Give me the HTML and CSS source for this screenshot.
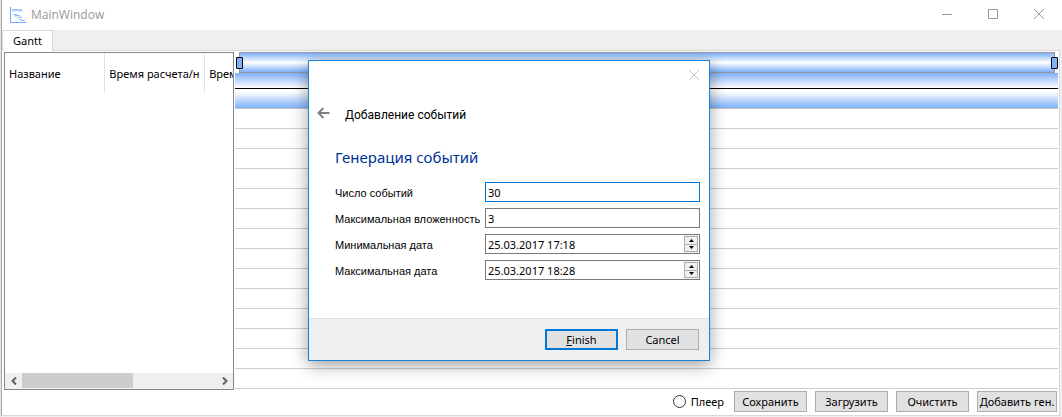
FILE: index.html
```html
<!DOCTYPE html>
<html lang="ru">
<head>
<meta charset="utf-8">
<title>MainWindow</title>
<link rel="stylesheet" href="styles.css">
</head>
<body>
<main class="window">
  <header class="titlebar">
    <svg class="app-icon" width="16" height="17" viewBox="0 0 16 17" shape-rendering="crispEdges" aria-hidden="true">
      <path d="M0 0h1v15h15v1H0z" fill="#73a9f5"/>
      <path d="M2 2h10v2H2z" fill="#a9ccfb"/><path d="M8 4h5v1H8z" fill="#d5e6fd"/><path d="M2 4h4v1H2z" fill="#e4effe"/>
      <path d="M3 7h4v1H3zM5 8h5v1H5z" fill="#8fbcf9"/><path d="M4 9h4v1H4zM9 9h3v1H9z" fill="#d5e6fd"/>
      <path d="M7 10h5v1H7z" fill="#a9ccfb"/><path d="M9 12h3v1H9zM11 13h4v1h-4z" fill="#8fbcf9"/>
    </svg>
    <h1 class="window-title">MainWindow</h1>
    <div class="window-controls">
      <button class="control" aria-label="Minimize"><svg width="12" height="12" viewBox="0 0 12 12"><path d="M1 6.500h10" stroke="#999"/></svg></button>
      <button class="control" aria-label="Maximize"><svg width="12" height="12" viewBox="0 0 12 12"><path d="M1.500 1.500h9v9h-9z" fill="none" stroke="#999"/></svg></button>
      <button class="control" aria-label="Close"><svg width="12" height="12" viewBox="0 0 12 12"><path d="M1 1l10 10M11 1L1 11" stroke="#999"/></svg></button>
    </div>
  </header>
  <nav class="tabs" role="tablist"><button class="tab" role="tab" aria-selected="true">Gantt</button></nav>
  <section class="pane">
    <div class="content">
      <div class="tree">
        <table class="tree-table">
          <thead><tr><th>Название</th><th>Время расчета/н</th><th>Врем</th></tr></thead>
        </table>
        <div class="scrollbar">
          <button class="scroll-arrow" aria-label="Влево"><svg width="6" height="8" viewBox="0 0 6 8"><path d="M5 0.500L1.500 4L5 7.500" fill="none" stroke="#606060" stroke-width="2"/></svg></button>
          <div class="scroll-track"><div class="scroll-thumb"></div></div>
          <button class="scroll-arrow" aria-label="Вправо"><svg width="6" height="8" viewBox="0 0 6 8"><path d="M1 0.500L4.500 4L1 7.500" fill="none" stroke="#606060" stroke-width="2"/></svg></button>
        </div>
      </div>
      <div class="chart">
        <div class="range"><i class="handle"></i><i class="range-bar"></i><i class="handle"></i></div>
        <div class="scale-top"></div>
        <div class="scale-bottom"></div>
        <div class="chart-rows"></div>
      </div>
    </div>
    <footer class="toolbar">
      <label class="player"><input class="radio" type="radio" name="player">Плеер</label>
      <button class="button">Сохранить</button>
      <button class="button">Загрузить</button>
      <button class="button">Очистить</button>
      <button class="button button-wide">Добавить ген.</button>
    </footer>
  </section>
</main>

<form class="dialog" role="dialog" aria-labelledby="dialog-title">
  <div class="dialog-top"><button type="button" class="dialog-close" aria-label="Close"><svg width="12" height="12" viewBox="0 0 12 12"><path d="M1 1l10 10M11 1L1 11" stroke="#c4c4c4"/></svg></button></div>
  <div class="dialog-nav">
    <button type="button" class="back" aria-label="Назад"><svg width="13" height="12" viewBox="0 0 13 12"><path d="M12.500 6H2M6.500 1L1.500 6l5 5" fill="none" stroke="#808080" stroke-width="2"/></svg></button>
    <span class="dialog-title" id="dialog-title">Добавление событий</span>
  </div>
  <div class="dialog-body">
    <h2 class="heading">Генерация событий</h2>
    <div class="fields">
      <label class="field-label" for="count">Число событий</label>
      <input class="field field-focus" id="count" value="30">
      <label class="field-label" for="depth">Максимальная вложенность</label>
      <input class="field" id="depth" value="3">
      <label class="field-label" for="min">Минимальная дата</label>
      <div class="field spin"><input class="spin-input" id="min" value="25.03.2017 17:18"><span class="spin-buttons"><button type="button" class="step" aria-label="Больше"><svg width="5" height="3" viewBox="0 0 5 3"><path d="M0 3L2.500 0L5 3z"/></svg></button><button type="button" class="step" aria-label="Меньше"><svg width="5" height="3" viewBox="0 0 5 3"><path d="M0 0L2.500 3L5 0z"/></svg></button></span></div>
      <label class="field-label" for="max">Максимальная дата</label>
      <div class="field spin"><input class="spin-input" id="max" value="25.03.2017 18:28"><span class="spin-buttons"><button type="button" class="step" aria-label="Больше"><svg width="5" height="3" viewBox="0 0 5 3"><path d="M0 3L2.500 0L5 3z"/></svg></button><button type="button" class="step" aria-label="Меньше"><svg width="5" height="3" viewBox="0 0 5 3"><path d="M0 0L2.500 3L5 0z"/></svg></button></span></div>
    </div>
  </div>
  <div class="dialog-footer">
    <button type="button" class="button button-default"><span><u>F</u>inish</span></button>
    <button type="button" class="button">Cancel</button>
  </div>
</form>
</body>
</html>
```
FILE: styles.css
```css
* { box-sizing: border-box; }
body { margin: 0; background: #efefef; color: #000; font: 11px/14px "Noto Sans", sans-serif; }
button, input { font: inherit; color: inherit; margin: 0; padding: 0; border: 0; background: none; border-radius: 0; outline: 0; }
svg { display: block; }

.window { display: flex; flex-direction: column; min-height: 100vh; border-left: 1px solid #e4e4e4; padding-bottom: 1px; }
.titlebar { display: flex; align-items: center; height: 30px; padding-left: 8px; background: #fff; border-left: 1px solid #a8a8a8; }
.app-icon { margin-right: 5px; }
.window-title { margin: 0; font: 12px/16px "Open Sans", sans-serif; color: #999; }
.window-controls { display: flex; margin-left: auto; }
.control { display: grid; place-items: center; width: 46px; height: 30px; padding-bottom: 2px; }
.tabs { display: flex; height: 20px; border-left: 1px solid #a8a8a8; }
.tab { width: 51px; height: 21px; background: #fff; border: 1px solid #d9d9d9; border-bottom: 0; position: relative; z-index: 1; }
.pane { flex: 1; display: flex; flex-direction: column; margin-right: 2px; padding: 1px 1px 3px 2px; background: #fff; border: 1px solid #d9d9d9; border-left-color: #a8a8a8; }

.content { flex: 1; display: flex; gap: 1px; }
.tree { flex: none; display: flex; flex-direction: column; width: 230px; border: 1px solid #828790; overflow: hidden; }
.tree-table { table-layout: fixed; width: 300px; border-collapse: collapse; }
.tree-table th { height: 40px; padding: 2px 0 0 4px; border-right: 1px solid #e0e0e0; font-weight: 400; text-align: left; white-space: nowrap; overflow: hidden; }
.scrollbar { display: flex; height: 16px; margin-top: auto; background: #efefef; }
.scroll-arrow { display: grid; place-items: center; width: 17px; height: 15px; }
.scroll-track { flex: 1; }
.scroll-thumb { width: 57%; height: 15px; background: #cdcdcd; }

.chart { flex: 1; display: flex; flex-direction: column; }
.range { display: flex; align-items: center; height: 21px; }
.range-bar { flex: 1; height: 21px; margin: 0 -4px; border: 1px solid #999; background: linear-gradient(#7eb1fa, #fff 50%, #7eb1fa); }
.handle { z-index: 1; width: 7px; height: 12px; background: #7eb1fa; border: 1px solid #000; border-radius: 1px; }
.handle:first-child { margin-left: 1px; }
.scale-top { height: 16px; border-bottom: 1px solid #000; background: linear-gradient(#7eb1fa, #fff); }
.scale-bottom { height: 20px; border-bottom: 1px solid #c6c6c6; background: linear-gradient(#fff 15%, #7eb1fa); }
.chart-rows { flex: 1; background: repeating-linear-gradient(#fff 0 19px, #cfcfcf 19px 20px); }

.toolbar { display: flex; justify-content: flex-end; align-items: center; gap: 8px; padding: 1px 1px 0 0; }
.player { display: flex; align-items: center; gap: 5px; margin-right: 2px; }
.radio { appearance: none; width: 13px; height: 13px; border: 1px solid #333; border-radius: 50%; background: #fff; }
.button { width: 73px; height: 21px; background: #e1e1e1; border: 1px solid #adadad; white-space: nowrap; }
.button-wide { width: 80px; }
.button-default { border: 2px solid #0078d7; }

.dialog { position: absolute; left: 308px; top: 60px; width: 402px; background: #fff; border: 1px solid #1883d7; box-shadow: 0 4px 16px rgba(0, 0, 0, .38); }
.dialog-top { display: flex; justify-content: flex-end; padding: 8px 9px 0 0; }
.dialog-close { display: grid; place-items: center; width: 12px; height: 12px; }
.dialog-nav { display: flex; align-items: center; gap: 15px; height: 16px; margin: 24px 0 1px 8px; }
.dialog-title { padding-top: 3px; font: 12px/14px Roboto, sans-serif; }
.dialog-body { padding: 25px 9px 38px 26px; }
.heading { margin: 0; font: 15px/20px "Noto Sans", sans-serif; color: #003399; }
.fields { display: grid; grid-template-columns: 144px 1fr; gap: 6px; align-items: center; margin-top: 15px; white-space: nowrap; }
.field-label { padding-top: 2px; font: 11px/14px "Liberation Sans", sans-serif; }
.field { width: 100%; height: 20px; padding: 0 2px; background: #fff; border: 1px solid #7a7a7a; }
.field-focus { border-color: #0078d7; }
.spin { display: flex; padding-right: 1px; }
.spin-input { flex: 1; min-width: 0; padding-top: 1px; }
.spin-buttons { display: flex; flex-direction: column; width: 14px; padding: 1px 0; background: #efefef; }
.step { flex: 1; display: grid; place-items: center; border: 1px solid #adadad; background: #f0f0f0; }
.step + .step { border-top: 0; }
.dialog-footer { display: flex; justify-content: flex-end; gap: 8px; padding: 10px; background: #efefef; border-top: 1px solid #dfdfdf; }
```
